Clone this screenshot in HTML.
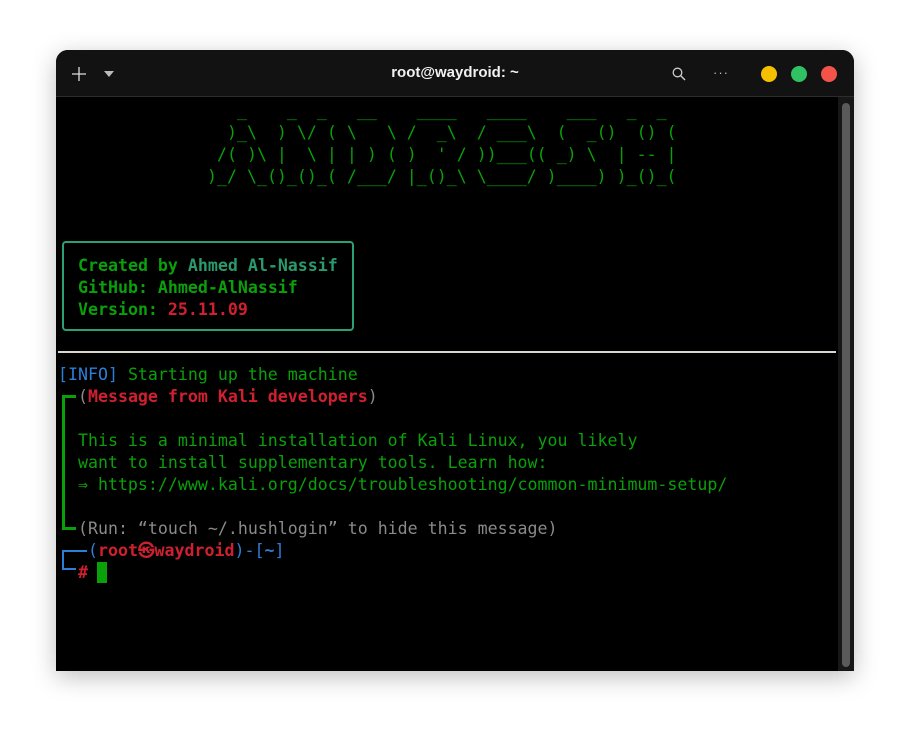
<!DOCTYPE html>
<html><head><meta charset="utf-8"><style>
html,body{margin:0;padding:0;width:910px;height:735px;background:#fff;overflow:hidden}
.win{position:absolute;left:56px;top:50px;width:798px;height:621px;background:#000;border-radius:12px 12px 0 0;overflow:hidden;box-shadow:0 6px 24px rgba(0,0,0,.25)}
.tb{position:absolute;left:0;top:0;width:798px;height:46px;background:#121212;border-bottom:1px solid #2c2c2c}
.title{position:absolute;left:0;width:798px;top:14px;text-align:center;color:#f2f2f2;font:bold 15px "Liberation Sans",sans-serif}
.dot{position:absolute;top:16px;width:16px;height:16px;border-radius:50%}
.sb{position:absolute;left:782px;top:47px;width:16px;height:574px;background:#171717}
.th{position:absolute;left:4px;top:6px;width:8px;height:564px;background:#5a5a5a;border-radius:4px}
.t{position:absolute;font-family:"DejaVu Sans Mono","Liberation Mono",monospace;font-size:16.6px;line-height:22px;white-space:pre;color:#0aa00a}
.g{color:#0aa00a}.r{color:#d0202f}.b{color:#2d7fd6}.gr{color:#8a8a8a}.tl{color:#2a9a6e}.bl{font-weight:bold}
</style></head><body>
<div class="win">
 <div class="tb">
  <svg style="position:absolute;left:16px;top:17px" width="14" height="14"><path d="M7 0V14M0 7H14" stroke="#ddd" stroke-width="1.3"/></svg>
  <svg style="position:absolute;left:48px;top:21px" width="10" height="7"><path d="M0 0H10L5 6Z" fill="#bbb"/></svg>
  <div class="title">root@waydroid: ~</div>
  <svg style="position:absolute;left:616px;top:17px" width="14" height="14"><circle cx="5.5" cy="5.5" r="4.3" fill="none" stroke="#ccc" stroke-width="1.3"/><path d="M8.5 8.5L13 13" stroke="#ccc" stroke-width="1.4"/></svg>
  <div style="position:absolute;left:657px;top:15px;color:#bbb;font:13px 'Liberation Sans',sans-serif;letter-spacing:1px">···</div>
  <div class="dot" style="left:705px;background:#f6c001"></div>
  <div class="dot" style="left:735px;background:#2fc162"></div>
  <div class="dot" style="left:765px;background:#f4534a"></div>
 </div>
 <div class="sb"><div class="th"></div></div>
 <div class="t" style="left:151px;top:50px">   _    _  _   __    ____   ____    ___   _  _
  )_\  ) \/ ( \   \ /  _\  / ___\  (  _()  () (
 /( )\ |  \ | | ) ( )  ' / ))___(( _) \  | -- |
)_/ \_()_()_( /___/ |_()_\ \____/ )____) )_()_(</div>
 <div style="position:absolute;left:6px;top:191px;width:288px;height:86px;border:2px solid #2aa073;border-radius:4px"></div>
 <div class="t bl" style="left:22px;top:205px">Created by <span class="tl">Ahmed Al-Nassif</span>
GitHub: Ahmed-AlNassif
Version: <span class="r">25.11.09</span></div>
 <div style="position:absolute;left:2px;top:301px;width:778px;height:2px;background:#d8d8d0"></div>
 <div style="position:absolute;left:6px;top:345px;width:3px;height:135px;background:#0aa00a"></div>
 <div style="position:absolute;left:6px;top:345px;width:14px;height:3px;background:#0aa00a"></div>
 <div style="position:absolute;left:6px;top:477px;width:14px;height:3px;background:#0aa00a"></div>
 <div style="position:absolute;left:6px;top:500px;width:2px;height:20px;background:#2d7fd6"></div>
 <div style="position:absolute;left:6px;top:500px;width:25px;height:2px;background:#2d7fd6"></div>
 <div style="position:absolute;left:6px;top:518px;width:14px;height:2px;background:#2d7fd6"></div>
 <div class="t" style="left:2px;top:314px"><span class="b">[INFO]</span> Starting up the machine
  <span class="gr">(</span><span class="r bl">Message from Kali developers</span><span class="gr">)</span>

  This is a minimal installation of Kali Linux, you likely
  want to install supplementary tools. Learn how:
  ⇒ https://www.kali.org/docs/troubleshooting/common-minimum-setup/

  <span class="gr">(Run: “touch ~/.hushlogin” to hide this message)</span>
   <span class="b">(</span><span class="r bl">root㉿waydroid</span><span class="b">)-[</span><span class="b bl">~</span><span class="b">]</span>
  <span class="r bl">#</span> </div>
 <div style="position:absolute;left:41px;top:512px;width:10px;height:21px;background:#0aa00a"></div>
</div>
</body></html>
